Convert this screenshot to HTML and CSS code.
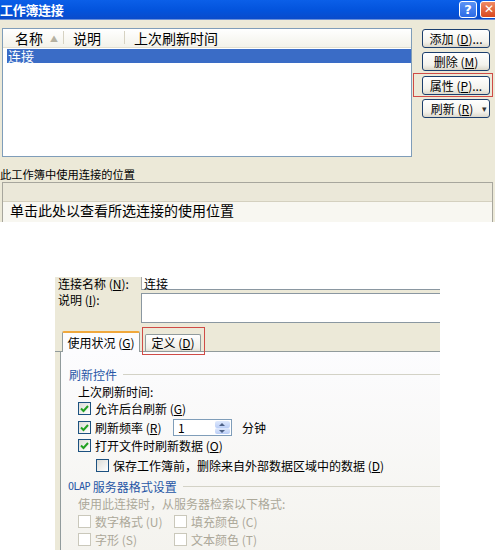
FILE: index.html
```html
<!DOCTYPE html>
<html lang="zh-CN">
<head>
  <meta charset="UTF-8" />
  <title>工作簿连接</title>
  <link rel="stylesheet" href="styles.css">
</head>
<body>
  <div class="win">
    <div class="titlebar">
      <span class="title">工作簿连接</span>
      <span class="tb-btns">
        <span class="tb-help">?</span>
        <span class="tb-close">✕</span>
      </span>
    </div>
    <div class="main-row">
      <div class="list">
        <div class="list-head">
          <div class="col col-name">名称<span class="sort">▲</span></div>
          <div class="col col-desc">说明</div>
          <div class="col col-time">上次刷新时间</div>
        </div>
        <div class="list-row selected">连接</div>
      </div>
      <div class="btn-col">
        <div class="btn">添加 (<u>D</u>)...</div>
        <div class="btn">删除 (<u>M</u>)</div>
        <div class="mark">
          <div class="btn">属性 (<u>P</u>)...</div>
        </div>
        <div class="btn btn-split">刷新 (<u>R</u>)<span class="drop">▾</span></div>
      </div>
    </div>
    <div class="usage-label">此工作簿中使用连接的位置</div>
    <div class="usage-box">
      <div class="usage-head"></div>
      <div class="usage-row">单击此处以查看所选连接的使用位置</div>
    </div>
  </div>

  <div class="props">
    <div class="field-row name-row">
      <div class="field-label">连接名称 (<u>N</u>):</div>
      <div class="field name-field">连接</div>
    </div>
    <div class="field-row desc-row">
      <div class="field-label">说明 (<u>I</u>):</div>
      <div class="field desc-field"></div>
    </div>
    <div class="tabs">
      <div class="tab active">使用状况 (<u>G</u>)</div>
      <div class="mark tab-mark">
        <div class="tab">定义 (<u>D</u>)</div>
      </div>
    </div>
    <div class="panel">
      <div class="group-title first">刷新控件</div>
      <div class="line sub">上次刷新时间:</div>
      <div class="line check-row r1">
        <span class="cb on"><svg viewBox="0 0 11 11"><path d="M2 5.5 L4.5 8 L9 3"/></svg></span>
        <span>允许后台刷新 (<u>G</u>)</span>
      </div>
      <div class="line check-row r2">
        <span class="cb on"><svg viewBox="0 0 11 11"><path d="M2 5.5 L4.5 8 L9 3"/></svg></span>
        <span class="freq-label">刷新频率 (<u>R</u>)</span>
        <span class="spin">
          <span class="spin-val">1</span>
          <span class="spin-btns"><span class="spin-up"></span><span class="spin-dn"></span></span>
        </span>
        <span class="unit">分钟</span>
      </div>
      <div class="line check-row r3">
        <span class="cb on"><svg viewBox="0 0 11 11"><path d="M2 5.5 L4.5 8 L9 3"/></svg></span>
        <span>打开文件时刷新数据 (<u>O</u>)</span>
      </div>
      <div class="line check-row r4 indent">
        <span class="cb"></span>
        <span>保存工作簿前，删除来自外部数据区域中的数据 (<u>D</u>)</span>
      </div>
      <div class="group-title olap"><span class="latin">OLAP</span>&nbsp;服务器格式设置</div>
      <div class="line sub disabled">使用此连接时，从服务器检索以下格式:</div>
      <div class="line check-row disabled pair">
        <span class="item"><span class="cb off"></span><span>数字格式 (U)</span></span>
        <span class="item"><span class="cb off"></span><span>填充颜色 (C)</span></span>
      </div>
      <div class="line check-row disabled pair">
        <span class="item"><span class="cb off"></span><span>字形 (S)</span></span>
        <span class="item"><span class="cb off"></span><span>文本颜色 (T)</span></span>
      </div>
    </div>
  </div>
</body>
</html>
```

FILE: styles.css
```css
* { box-sizing: border-box; }
body {
  margin: 0;
  width: 495px;
  height: 550px;
  overflow: hidden;
  background: #fff;
  color: #000;
  font-family: "Noto Sans CJK SC", "Noto Sans", sans-serif;
  font-size: 12px;
}
u { text-decoration: underline; }

/* top dialog */
.win {
  height: 222px;
  overflow: hidden;
  background: #ece9d8;
}
.titlebar {
  height: 20px;
  display: flex;
  align-items: center;
  justify-content: space-between;
  background: linear-gradient(#0b5fe8, #0353dc 55%, #0a4bcb);
  border-bottom: 1px solid #6a8fd8;
}
.title {
  color: #fff;
  font-weight: bold;
  font-size: 13px;
  line-height: 18px;
  letter-spacing: -0.3px;
}
.tb-btns { display: flex; gap: 3px; align-self: flex-start; margin-top: 1px; }
.tb-help, .tb-close {
  width: 18px;
  height: 17px;
  border: 1px solid #fff;
  border-radius: 3px;
  color: #fff;
  font: bold 13px/15px "DejaVu Sans", sans-serif;
  text-align: center;
}
.tb-help { background: linear-gradient(#5b93f5, #2b6ae6); }
.tb-close {
  background: linear-gradient(#ef8a64, #d9481e);
  margin-right: -3px;
  font-size: 12px;
}

.main-row {
  display: flex;
  align-items: flex-start;
  padding-left: 2px;
}
.list {
  width: 410px;
  height: 129px;
  margin-top: 8px;
  background: #fff;
  border: 1px solid #7f9db9;
}
.list-head {
  display: flex;
  height: 19px;
  background: linear-gradient(#fff, #f3f2ea);
  border-bottom: 1px solid #e2dfd0;
  font-size: 14px;
}
.col { border-right: 1px solid #d6d2c2; margin: 2px 0 3px; line-height: 14px; }
.col-name { width: 61px; padding-left: 12px; }
.col-desc { width: 61px; padding-left: 9px; }
.col-time { flex: 1; padding-left: 9px; border-right: none; }
.sort { font-size: 8px; color: #b5b1a1; margin-left: 7px; vertical-align: 2px; }
.list-row {
  margin: 1px 0 0 4px;
  height: 14px;
  font-size: 13px;
  line-height: 14px;
  padding-left: 1px;
}
.list-row.selected { background: #3a6cc6; color: #fff; }

.btn-col {
  width: 68px;
  margin-top: 9px;
  margin-left: 10px;
  display: flex;
  flex-direction: column;
}
.btn {
  height: 19px;
  border: 1px solid #1c3f6e;
  border-radius: 3px;
  background: linear-gradient(#fff, #f3f2ec 70%, #dcd8cb);
  text-align: center;
  font-size: 12px;
  line-height: 17px;
  margin-bottom: 4px;
}
.mark {
  border: 1px solid #cf4b46;
  margin: -2px -3px 2px -9px;
  padding: 2px 2px 1px 8px;
}
.mark .btn { margin-bottom: 0; }
.btn-split { position: relative; padding-right: 8px; }
.drop { position: absolute; right: 2px; top: 0; font-size: 9px; color: #333; }

.usage-label {
  margin-top: 10px;
  height: 15px;
  font-size: 11.25px;
  line-height: 14px;
}
.usage-box {
  margin: 0 2px;
  border: 1px solid #a7a69d;
  background: #f8f7f1;
}
.usage-head {
  height: 19px;
  background: #ebe8d9;
  border-bottom: 1px solid #d4d0bf;
}
.usage-row {
  font-size: 14px;
  line-height: 16px;
  padding: 0 0 6px 7px;
}

/* property dialog */
.props {
  margin: 55px 0 0 55px;
  width: 385px;
  height: 273px;
  background: #ece9d8;
}
.field-row { display: flex; }
.field-label { width: 86px; padding-left: 3px; line-height: 14px; }
.field { flex: 1; background: #fff; }
.name-row { height: 16px; }
.name-row .field-label, .name-row .field { height: 13px; line-height: 13px; }
.name-field {
  border-left: 1px solid #a9a9a9;
  border-bottom: 1px solid #8a97a1;
  padding-left: 2px;
}
.desc-field { height: 30px; border: 1px solid #8a97a1; border-right: none; }

.tabs {
  display: flex;
  align-items: flex-end;
  height: 29px;
  padding-left: 7px;
  border-bottom: 1px solid #919b9c;
}
.tab {
  height: 17px;
  width: 56px;
  border: 1px solid #919b9c;
  border-bottom: none;
  border-radius: 2px 2px 0 0;
  background: linear-gradient(#fff, #f0efe8 80%, #e3e0d3);
  text-align: center;
  line-height: 16px;
}
.tab.active {
  width: 78px;
  height: 21px;
  margin-bottom: -1px;
  border-top: 2px solid #f0a83c;
  background: #fcfcfe;
  line-height: 19px;
}
.tab-mark {
  margin: 0 0 -4px 2px;
  padding: 6px 3px 3px 2px;
}

.panel {
  margin-left: 5px;
  height: 200px;
  border-left: 1px solid #919b9c;
  background: linear-gradient(#fcfcfe, #f4f3ee);
  padding-top: 13px;
}
.group-title {
  display: flex;
  align-items: center;
  height: 18px;
  padding-left: 8px;
  color: #2756a6;
}
.group-title::after {
  content: "";
  flex: 1;
  height: 1px;
  margin-left: 6px;
  background: #d3d2c6;
}
.group-title.olap { padding-left: 7px; margin-top: 3px; }
.latin { font-family: "DejaVu Sans Mono", monospace; font-size: 10px; letter-spacing: -0.5px; }

.line {
  display: flex;
  align-items: center;
  padding-left: 17px;
  height: 17px;
}
.r2 { height: 19px; margin-top: 1px; }
.r4 { height: 18px; margin-top: 2px; }
.indent { padding-left: 35px; }
.pair { height: 18px; }
.disabled { color: #aca899; }

.cb {
  width: 13px;
  height: 13px;
  margin-right: 4px;
  border: 1px solid #1c5180;
  background: linear-gradient(135deg, #dcdcd7, #fff);
  flex: none;
  display: inline-flex;
}
.cb svg { width: 11px; height: 11px; }
.cb path { fill: none; stroke: #21a121; stroke-width: 2; }
.cb.off { border-color: #cac8bb; background: #fff; }
.item { display: inline-flex; align-items: center; width: 96px; }

.freq-label { width: 78px; }
.spin {
  width: 59px;
  height: 17px;
  border: 1px solid #7f9db9;
  background: #fff;
  display: flex;
  align-items: stretch;
}
.spin-val { flex: 1; padding-left: 4px; line-height: 15px; }
.spin-btns {
  width: 15px;
  display: flex;
  flex-direction: column;
  margin: 1px;
}
.spin-up, .spin-dn {
  flex: 1;
  background: linear-gradient(#dfe9fd, #b9cdf6);
  border-radius: 2px;
  position: relative;
}
.spin-up::after, .spin-dn::after {
  content: "";
  position: absolute;
  left: 4px;
  border-left: 3px solid transparent;
  border-right: 3px solid transparent;
}
.spin-up::after { top: 2px; border-bottom: 3px solid #4d6185; }
.spin-dn::after { top: 2px; border-top: 3px solid #4d6185; }
.unit { margin-left: 10px; }
```
